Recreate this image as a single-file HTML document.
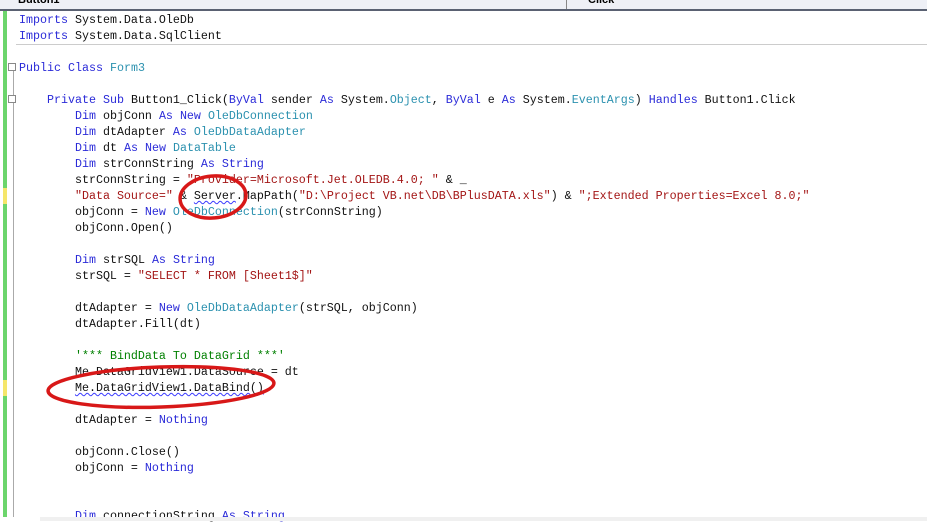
<!DOCTYPE html>
<html><head><meta charset="utf-8"><style>
body{margin:0;width:927px;height:521px;overflow:hidden;background:#fff;position:relative;font-family:"Liberation Mono",monospace;}
.hdr{position:absolute;left:0;top:0;width:927px;height:9px;background:#eef0f6;border-bottom:2px solid #5a6172;font:bold 11px "Liberation Sans",sans-serif;}
.l{position:absolute;left:19px;height:16px;line-height:16px;font-size:11.67px;white-space:pre;color:#111;}
.k{color:#2a2ad8}.t{color:#2b91af}.s{color:#a31515}.c{color:#008000}
.w{text-decoration:underline wavy #3a3aff;text-decoration-thickness:1px}
</style></head><body>
<div class="hdr"><span style="position:absolute;left:18px;top:-6px">Button1</span><span style="position:absolute;left:588px;top:-6px">Click</span><div style="position:absolute;left:566px;top:0;width:1px;height:9px;background:#888"></div></div>
<div style="position:absolute;left:3px;top:11px;width:4px;height:506px;background:#6cd56c"></div>
<div style="position:absolute;left:3px;top:188px;width:4px;height:16px;background:#f5e66a"></div>
<div style="position:absolute;left:3px;top:380px;width:4px;height:16px;background:#f5e66a"></div>
<div style="position:absolute;left:13px;top:67px;width:1px;height:450px;background:#aaa"></div>
<div style="position:absolute;left:8px;top:63px;width:8px;height:8px;border:1px solid #888;background:#fff;box-sizing:border-box"></div>
<div style="position:absolute;left:8px;top:95px;width:8px;height:8px;border:1px solid #888;background:#fff;box-sizing:border-box"></div>
<div style="position:absolute;left:16px;top:44px;width:911px;height:1px;background:#ccc"></div>
<div class="l" style="top:12px"><span class="k">Imports</span> System.Data.OleDb</div>
<div class="l" style="top:28px"><span class="k">Imports</span> System.Data.SqlClient</div>
<div class="l" style="top:60px"><span class="k">Public</span> <span class="k">Class</span> <span class="t">Form3</span></div>
<div class="l" style="top:92px">    <span class="k">Private</span> <span class="k">Sub</span> Button1_Click(<span class="k">ByVal</span> sender <span class="k">As</span> System.<span class="t">Object</span>, <span class="k">ByVal</span> e <span class="k">As</span> System.<span class="t">EventArgs</span>) <span class="k">Handles</span> Button1.Click</div>
<div class="l" style="top:108px">        <span class="k">Dim</span> objConn <span class="k">As</span> <span class="k">New</span> <span class="t">OleDbConnection</span></div>
<div class="l" style="top:124px">        <span class="k">Dim</span> dtAdapter <span class="k">As</span> <span class="t">OleDbDataAdapter</span></div>
<div class="l" style="top:140px">        <span class="k">Dim</span> dt <span class="k">As</span> <span class="k">New</span> <span class="t">DataTable</span></div>
<div class="l" style="top:156px">        <span class="k">Dim</span> strConnString <span class="k">As</span> <span class="k">String</span></div>
<div class="l" style="top:172px">        strConnString = <span class="s">"Provider=Microsoft.Jet.OLEDB.4.0; "</span> &amp; _</div>
<div class="l" style="top:188px">        <span class="s">"Data Source="</span> &amp; <span class="w">Server</span>.MapPath(<span class="s">"D:\Project VB.net\DB\BPlusDATA.xls"</span>) &amp; <span class="s">";Extended Properties=Excel 8.0;"</span></div>
<div class="l" style="top:204px">        objConn = <span class="k">New</span> <span class="t">OleDbConnection</span>(strConnString)</div>
<div class="l" style="top:220px">        objConn.Open()</div>
<div class="l" style="top:252px">        <span class="k">Dim</span> strSQL <span class="k">As</span> <span class="k">String</span></div>
<div class="l" style="top:268px">        strSQL = <span class="s">"SELECT * FROM [Sheet1$]"</span></div>
<div class="l" style="top:300px">        dtAdapter = <span class="k">New</span> <span class="t">OleDbDataAdapter</span>(strSQL, objConn)</div>
<div class="l" style="top:316px">        dtAdapter.Fill(dt)</div>
<div class="l" style="top:348px">        <span class="c">'*** BindData To DataGrid ***'</span></div>
<div class="l" style="top:364px">        Me.DataGridView1.DataSource = dt</div>
<div class="l" style="top:380px">        <span class="w">Me.DataGridView1.DataBind()</span></div>
<div class="l" style="top:412px">        dtAdapter = <span class="k">Nothing</span></div>
<div class="l" style="top:444px">        objConn.Close()</div>
<div class="l" style="top:460px">        objConn = <span class="k">Nothing</span></div>
<div class="l" style="top:508px">        <span class="k">Dim</span> connectionString <span class="k">As</span> <span class="k">String</span></div>
<div style="position:absolute;left:40px;top:517px;width:887px;height:4px;background:#f0f0f0"></div>
<svg style="position:absolute;left:0;top:0" width="927" height="521">
<ellipse cx="213" cy="197" rx="33" ry="21" fill="none" stroke="#d81818" stroke-width="3.5" transform="rotate(-5 213 197)"/>
<ellipse cx="161" cy="387" rx="113" ry="20" fill="none" stroke="#d81818" stroke-width="3.5" transform="rotate(-2 161 387)"/>
</svg>
</body></html>
